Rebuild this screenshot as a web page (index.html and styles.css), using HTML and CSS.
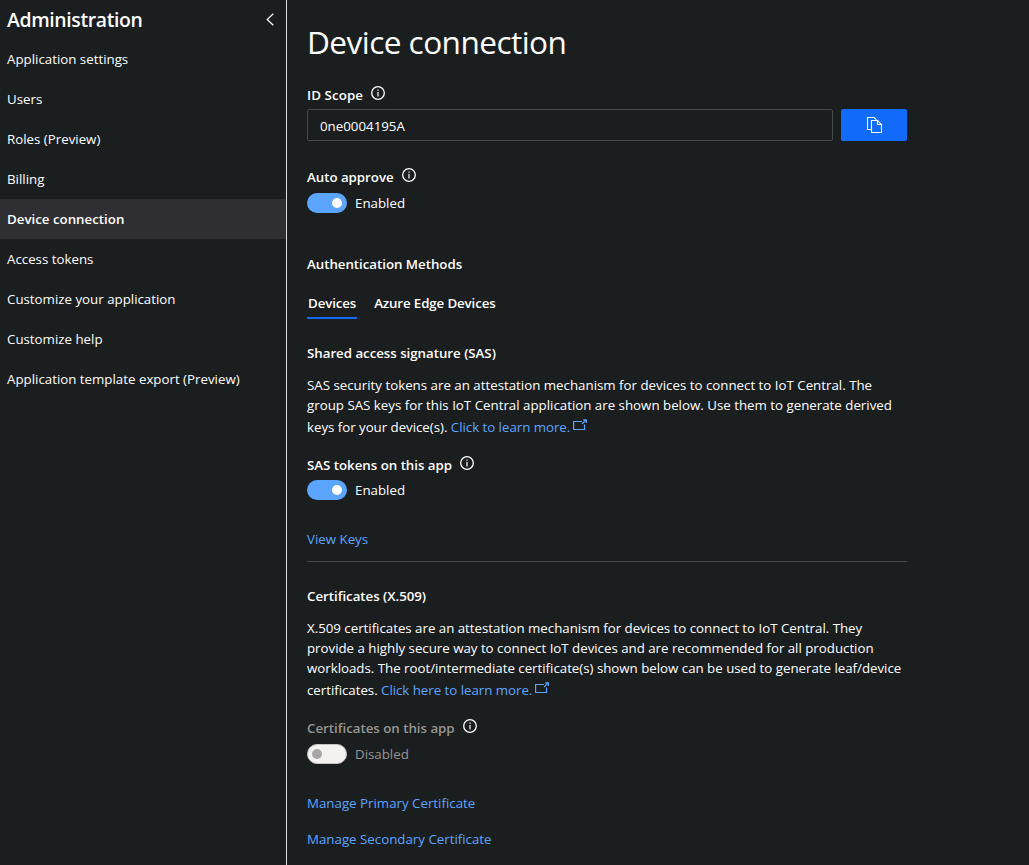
FILE: index.html
```html
<!DOCTYPE html>
<html lang="en">
<head>
<meta charset="utf-8">
<title>Device connection</title>
<link rel="stylesheet" href="styles.css">
</head>
<body>
<svg class="sprite" aria-hidden="true">
  <symbol id="info" viewBox="0 0 14 14"><circle cx="7" cy="7" r="6.3" fill="none" stroke="currentColor" stroke-width="1.3"/><path d="M7 6V10.4M7 3.6V4.8" fill="none" stroke="currentColor" stroke-width="1.2"/></symbol>
  <symbol id="external" viewBox="0 0 14 12"><path d="M9 2.5H.6V10.5H11.5V5.5M9 5L12.8 1.2M10.2 .8H13.3V3.9" fill="none" stroke="currentColor" stroke-width="1.2"/></symbol>
</svg>
<div class="app">
  <nav class="sidebar">
    <div class="side-head">
      <h2>Administration</h2>
      <svg class="chevron" viewBox="0 0 8 13"><path d="M7.3 .7L1.2 6.5L7.3 12.3" fill="none" stroke="currentColor" stroke-width="1.2"/></svg>
    </div>
    <a class="item">Application settings</a>
    <a class="item">Users</a>
    <a class="item">Roles (Preview)</a>
    <a class="item">Billing</a>
    <a class="item active">Device connection</a>
    <a class="item">Access tokens</a>
    <a class="item">Customize your application</a>
    <a class="item">Customize help</a>
    <a class="item">Application template export (Preview)</a>
  </nav>
  <main class="content">
    <h1>Device connection</h1>
    <div class="label id-scope">ID Scope<svg class="info"><use href="#info"/></svg></div>
    <div class="field">
      <div class="input">0ne0004195A</div>
      <button class="copy" aria-label="Copy"><svg viewBox="0 0 15 17"><path d="M4.5 12.5H.5V.5H7.2L9.5 2.8M4.5 3.5H10.5L14.5 7.5V15.5H4.5ZM10.5 3.5V7.5H14.5" fill="none" stroke="currentColor" stroke-width="1.1"/></svg></button>
    </div>
    <div class="label auto-approve">Auto approve<svg class="info"><use href="#info"/></svg></div>
    <div class="toggle-row"><i class="toggle"></i>Enabled</div>
    <h3 class="methods">Authentication Methods</h3>
    <div class="tabs">
      <div class="tab selected">Devices</div>
      <div class="tab">Azure Edge Devices</div>
    </div>
    <h3 class="sas">Shared access signature (SAS)</h3>
    <p>SAS security tokens are an attestation mechanism for devices to connect to IoT Central. The<br>group SAS keys for this IoT Central application are shown below. Use them to generate derived<br><span class="last">keys for your device(s). <a>Click to learn more.<svg class="external"><use href="#external"/></svg></a></span></p>
    <div class="label method-label">SAS tokens on this app<svg class="info"><use href="#info"/></svg></div>
    <div class="toggle-row tight"><i class="toggle"></i>Enabled</div>
    <a class="link">View Keys</a>
    <hr>
    <h3 class="certs">Certificates (X.509)</h3>
    <p class="x509">X.509 certificates are an attestation mechanism for devices to connect to IoT Central. They<br>provide a highly secure way to connect IoT devices and are recommended for all production<br>workloads. The root/intermediate certificate(s) shown below can be used to generate leaf/device<br><span class="last">certificates. <a>Click here to learn more.<svg class="external"><use href="#external"/></svg></a></span></p>
    <div class="label method-label off">Certificates on this app<svg class="info"><use href="#info"/></svg></div>
    <div class="toggle-row off"><i class="toggle"></i>Disabled</div>
    <a class="link">Manage Primary Certificate</a>
    <a class="link second">Manage Secondary Certificate</a>
  </main>
</div>
</body>
</html>
```
FILE: styles.css
```css
* { box-sizing: border-box; }
body {
  margin: 0;
  background: #1b1e1f;
  color: #fff;
  font: 13.3px/20px "Open Sans", "Segoe UI", sans-serif;
}
.sprite { display: none; }
.app { display: flex; height: 865px; overflow: hidden; }

.sidebar { width: 287px; flex: none; border-right: 1px solid #e1dfdd; }
.side-head {
  display: flex;
  justify-content: space-between;
  height: 39px;
  padding: 0 12px 0 7px;
}
h2 { margin: 0; font-size: 19.4px; font-weight: 600; line-height: 39px; letter-spacing: -.36px; }
.chevron { width: 8px; height: 13px; margin-top: 12.5px; }
.item { display: block; height: 40px; padding-left: 7px; line-height: 40px; }
.active { background: #2f2f33; font-weight: 600; }

.content { width: 620px; padding: 18px 0 0 20px; white-space: nowrap; }
h1 { margin: 0; font-size: 31.6px; font-weight: 400; line-height: 48px; letter-spacing: -.56px; }
h3 { margin: 0; font-size: 13.3px; font-weight: 600; letter-spacing: -.03px; }
.label { display: flex; font-weight: 600; }
.id-scope { margin-top: 19px; letter-spacing: .1px; }
.info { width: 14px; height: 14px; margin: .5px 0 0 8px; color: #fff; }
.field { display: flex; gap: 8px; margin-top: 4px; }
.input {
  width: 526px;
  height: 32px;
  padding: 1px 0 0 12px;
  border: 1px solid #48484b;
  border-radius: 2px;
  line-height: 30px;
}
.copy {
  display: flex;
  align-items: center;
  justify-content: center;
  width: 66px;
  height: 32px;
  padding: 0;
  border: 0;
  border-radius: 2px;
  background: #136bfb;
  color: #fff;
}
.copy svg { width: 15px; height: 17px; }
.auto-approve { margin-top: 26px; letter-spacing: -.03px; }
.toggle-row { display: flex; gap: 8px; margin-top: 6px; }
.toggle-row.tight { margin-top: 5px; }
.toggle {
  display: flex;
  align-items: center;
  justify-content: flex-end;
  width: 40px;
  height: 20px;
  padding: 0 5px;
  border-radius: 10px;
  background: #5ca5ff;
}
.toggle::before { content: ""; width: 10px; height: 10px; border-radius: 50%; background: #fff; }
.methods { margin-top: 41px; }
.tabs { display: flex; gap: 16px; margin-top: 19px; font-weight: 600; letter-spacing: -.12px; }
.tab { height: 26px; padding: 0 1px; }
.selected { border-bottom: 2px solid #136bfb; }
.sas { margin-top: 24px; }
p { margin: 12px 0 0; }
.x509 { letter-spacing: -.015px; }
.last { display: block; padding-top: 2px; letter-spacing: -.03px; }
a { color: #5ca5ff; }
.item { color: #fff; }
.external { width: 14px; height: 12px; margin-left: 3px; vertical-align: 0; position: relative; top: -1px; }
.method-label { margin-top: 18px; letter-spacing: -.02px; }
.link { display: block; margin-top: 29px; }
.second { margin-top: 16px; }
hr { height: 1px; margin: 12px 0 24px; border: 0; background: #48484b; }
.off { color: #979593; }
.off .toggle { justify-content: flex-start; border: 1px solid #c8c6c4; background: #f3f2f1; }
.off .toggle { padding-left: 4px; }
.off .toggle::before { background: #a6a6a6; }
```
